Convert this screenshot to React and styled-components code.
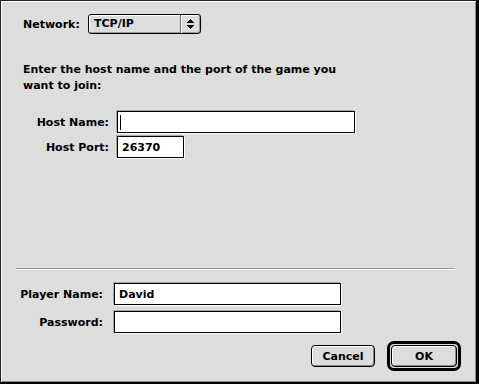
import styled, { createGlobalStyle } from "styled-components";

const GlobalStyle = createGlobalStyle`
  html, body {
    margin: 0;
    padding: 0;
    background: #000;
  }
  body {
    font-family: "DejaVu Sans", "Liberation Sans", sans-serif;
  }
`;

// 대화상자 창 - 플래티넘 테두리
const Window = styled.div`
  box-sizing: border-box;
  width: 479px;
  height: 384px;
  display: flex;
  flex-direction: column;
  background: #dddddd;
  border-top: 1px solid #222;
  border-left: 1px solid #222;
  border-right: 3px solid #000;
  border-bottom: 2px solid #000;
  box-shadow: inset 1px 1px 0 #fff, inset -1px -1px 0 #888;
  padding-bottom: 11px;
  font: bold 11px/13px "DejaVu Sans", "Liberation Sans", sans-serif;
  color: #000;
`;

const NetworkRow = styled.div`
  display: flex;
  align-items: center;
  height: 20px;
  margin: 13px 0 0 22px;
`;

const NetworkLabel = styled.span`
  width: 65px;
  white-space: nowrap;
`;

const Popup = styled.div`
  box-sizing: border-box;
  width: 113px;
  height: 20px;
  display: flex;
  border: 1px solid #000;
  border-radius: 3px;
  background: #dddddd;
  box-shadow: inset 1px 1px 0 #fff, inset -1px -1px 0 #999;
`;

const PopupText = styled.span`
  flex: 1;
  padding-left: 5px;
  line-height: 18px;
`;

const PopupArrows = styled.span`
  box-sizing: border-box;
  width: 20px;
  display: flex;
  align-items: center;
  justify-content: center;
  border-left: 1px solid #666;
  box-shadow: inset 1px 0 0 #fff;
`;

const Instructions = styled.p`
  width: 336px;
  margin: 28px 0 0 22px;
  line-height: 16px;
`;

const FormGrid = styled.div`
  display: grid;
  grid-template-columns: ${(p) => p.$labelWidth}px auto;
  column-gap: ${(p) => p.$gap}px;
  row-gap: ${(p) => p.$rowGap}px;
  align-items: center;
  justify-content: start;
  margin-top: ${(p) => p.$top}px;
`;

const Label = styled.label`
  text-align: right;
  white-space: nowrap;
`;

const Field = styled.div`
  box-sizing: border-box;
  width: ${(p) => p.$width}px;
  height: 22px;
  display: flex;
  align-items: center;
  padding-left: 4px;
  background: #fff;
  border: 1px solid #000;
  box-shadow: -1px -1px 0 #aaa, 1px 1px 0 #fff;
  white-space: nowrap;
`;

const Caret = styled.span`
  display: inline-block;
  width: 1px;
  height: 15px;
  margin-left: -2px;
  background: #000;
`;

const Divider = styled.div`
  height: 0;
  width: 439px;
  margin: auto 0 0 15px;
  border-top: 1px solid #999;
  border-bottom: 1px solid #fff;
`;

const ButtonRow = styled.div`
  display: flex;
  justify-content: flex-end;
  align-items: center;
  gap: 12px;
  height: 30px;
  margin-top: 8px;
  padding-right: 15px;
`;

const Button = styled.button`
  box-sizing: border-box;
  width: ${(p) => p.$width}px;
  height: 22px;
  padding: 0;
  border: 1px solid #000;
  border-radius: 4px;
  background: #dddddd;
  box-shadow: inset 1px 1px 0 #fff, inset -1px -1px 0 #888;
  font: inherit;
  color: #000;
`;

const DefaultRing = styled.span`
  display: flex;
  padding: 1px;
  border: 3px solid #000;
  border-radius: 7px;
`;

function Arrows() {
  return (
    <svg width="7" height="10" viewBox="0 0 7 10" shapeRendering="crispEdges">
      <rect x="3" y="0" width="1" height="1" fill="#000" />
      <rect x="2" y="1" width="3" height="1" fill="#000" />
      <rect x="1" y="2" width="5" height="1" fill="#000" />
      <rect x="0" y="3" width="7" height="1" fill="#000" />
      <rect x="0" y="6" width="7" height="1" fill="#000" />
      <rect x="1" y="7" width="5" height="1" fill="#000" />
      <rect x="2" y="8" width="3" height="1" fill="#000" />
      <rect x="3" y="9" width="1" height="1" fill="#000" />
    </svg>
  );
}

export default function App() {
  return (
    <>
      <GlobalStyle />
      <Window>
        <NetworkRow>
          <NetworkLabel>Network:</NetworkLabel>
          <Popup>
            <PopupText>TCP/IP</PopupText>
            <PopupArrows>
              <Arrows />
            </PopupArrows>
          </Popup>
        </NetworkRow>

        <Instructions>
          Enter the host name and the port of the game you want to join:
        </Instructions>

        <FormGrid $labelWidth={108} $gap={8} $rowGap={3} $top={17}>
          <Label>Host Name:</Label>
          <Field $width={238}>
            <Caret />
          </Field>
          <Label>Host Port:</Label>
          <Field $width={67}>26370</Field>
        </FormGrid>

        <Divider />

        <FormGrid $labelWidth={102} $gap={11} $rowGap={6} $top={13}>
          <Label>Player Name:</Label>
          <Field $width={227}>David</Field>
          <Label>Password:</Label>
          <Field $width={227} />
        </FormGrid>

        <ButtonRow>
          <Button $width={64}>Cancel</Button>
          <DefaultRing>
            <Button $width={66}>OK</Button>
          </DefaultRing>
        </ButtonRow>
      </Window>
    </>
  );
}
